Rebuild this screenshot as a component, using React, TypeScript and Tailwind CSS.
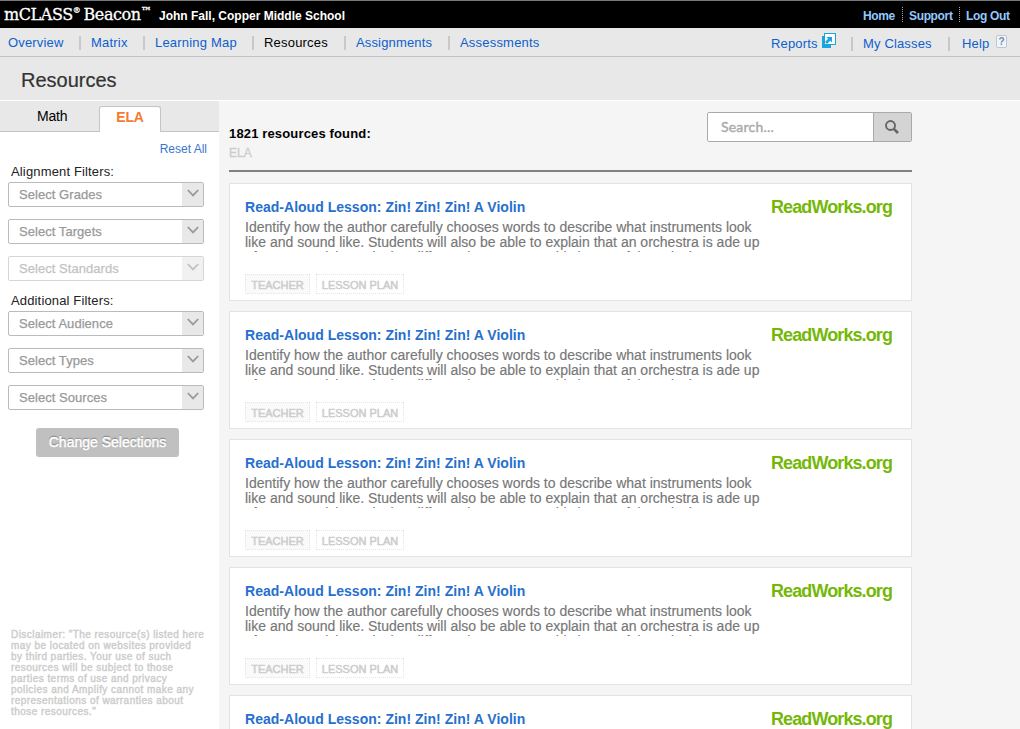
import React from "react";

const nav = [
  { label: "Overview", box: "w-[71px]", track: "tracking-[0.16px]" },
  { label: "Matrix", box: "w-[52px]", track: "tracking-[0.2px]" },
  { label: "Learning Map", box: "w-[97px]", track: "tracking-[0.2px]" },
  { label: "Resources", box: "w-[80px]", track: "tracking-[0.2px]", active: true },
  { label: "Assignments", box: "w-[92px]", track: "tracking-[0.15px]" },
  { label: "Assessments", box: "w-[90px]", track: "tracking-[0.2px]" },
];

function Chevron() {
  return (
    <svg width="12" height="8" viewBox="0 0 12 8" fill="none" stroke="#999" strokeWidth="1.8">
      <path d="M0.8 1 L6 6.4 L11.2 1" />
    </svg>
  );
}

function Select({ label, disabled = false }: { label: string; disabled?: boolean }) {
  return (
    <div
      className={`flex h-[25px] w-[196px] overflow-hidden rounded-[2px] border border-[#bbb] bg-white ${disabled ? "opacity-60" : ""}`}
    >
      <span className="flex-1 pl-[10px] text-[13px] leading-[23px] tracking-[0.05px] text-[#999] [-webkit-text-stroke:0.25px_#999]">
        {label}
      </span>
      <span className="flex w-[21px] justify-center bg-[#e8e8e8] pt-[6px]">
        <Chevron />
      </span>
    </div>
  );
}

function ReportsIcon() {
  return (
    <svg width="14" height="15" viewBox="0 0 14 15">
      <rect x="0" y="3" width="9" height="12" fill="#1ba4de" />
      <rect x="2.5" y="0.5" width="11" height="11" fill="#fff" stroke="#1ba4de" />
      <path d="M4.5 4 H10 V9.5 L8.2 7.8 L5 11 L3 9 L6.2 5.8 Z" fill="#1ba4de" />
    </svg>
  );
}

function Card() {
  return (
    <article className="flex h-[118px] w-[683px] shrink-0 border border-[#e3e3e3] bg-white pl-[15px]">
      <div className="w-[526px] pt-[15px]">
        <h2 className="h-[21px] whitespace-nowrap text-[14px] font-bold leading-[17px] tracking-[0.02px] text-[#266fce]">
          Read-Aloud Lesson: Zin! Zin! Zin! A Violin
        </h2>
        <p className="h-[32px] overflow-hidden whitespace-nowrap text-[14px] leading-[15px] text-[#777] [-webkit-text-stroke:0.15px_#777]">
          Identify how the author carefully chooses words to describe what instruments look
          <br />
          like and sound like. Students will also be able to explain that an orchestra is ade up
          <br />
          of many musicians playing different instruments. This is a useful musical
        </p>
        <div className="mt-[22px] flex gap-[6px] text-[11px] leading-[20px] text-[#ccc] [-webkit-text-stroke:0.5px_#ccc]">
          <span className="h-[20px] w-[65px] border border-dotted border-[#e4e4e4] bg-[#fafafa] text-center">TEACHER</span>
          <span className="h-[20px] w-[88px] whitespace-nowrap border border-dotted border-[#e4e4e4] text-center">LESSON PLAN</span>
        </div>
      </div>
      <div className="pt-[12px] text-[18px] font-bold leading-[22px] tracking-[-0.9px] text-[#74b807]">ReadWorks.org</div>
    </article>
  );
}

export default function App() {
  return (
    <div className="flex h-[729px] w-[1020px] flex-col overflow-hidden bg-[#f5f5f5] font-['Liberation_Sans',Arial,sans-serif]">
      <header className="flex h-[28px] shrink-0 justify-between border-t border-[#777] bg-black text-white">
        <div className="flex whitespace-nowrap">
          <div className="flex w-[154px] items-start pl-[4px] font-['DejaVu_Serif',serif] text-[16px] leading-[27px] tracking-[-0.4px] [-webkit-text-stroke:0.3px_#fff]">
            <span>mCLASS</span>
            <span className="text-[8px] leading-[20px]">®</span>
            <span className="pl-[3px]">Beacon</span>
            <span className="text-[11px] leading-[22px]">™</span>
          </div>
          <div className="pl-[5px] text-[12px] font-bold leading-[30px]">John Fall, Copper Middle School</div>
        </div>
        <div className="flex items-start whitespace-nowrap pt-[6px] text-[12px] font-bold leading-[19px] tracking-[-0.35px] text-[#93c9ff]">
          <span className="w-[39px]">Home</span>
          <span className="h-[15px] w-[57px] border-l border-dotted border-[#93a9bf] pl-[6px]">Support</span>
          <span className="h-[15px] w-[61px] border-l border-dotted border-[#93a9bf] pl-[6px]">Log Out</span>
        </div>
      </header>
      <nav className="flex h-[29px] shrink-0 justify-between border-b border-[#c2c2c2] bg-[#e8e8e8] text-[13px] leading-[29px] text-[#0d5fce]">
        <div className="flex pl-[8px]">
          {nav.map((n, i) => (
            <div key={n.label} className="flex whitespace-nowrap">
              {i > 0 && <span className="mr-[10px] mt-[8px] h-[14px] w-[2px] bg-[#c8c8c8]" />}
              <span className={`${n.box} ${n.track} ${n.active ? "text-black" : ""}`}>{n.label}</span>
            </div>
          ))}
        </div>
        <div className="flex whitespace-nowrap pr-[13px] leading-[31px] tracking-[0.15px]">
          <span className="w-[51px]">Reports</span>
          <span className="w-[29px] pt-[5px]"><ReportsIcon /></span>
          <span className="mr-[10px] mt-[9px] h-[14px] w-[2px] bg-[#c8c8c8]" />
          <span className="w-[85px]">My Classes</span>
          <span className="mr-[12px] mt-[9px] h-[14px] w-[2px] bg-[#c8c8c8]" />
          <span className="w-[34px]">Help</span>
          <span className="mt-[7px] h-[13px] w-[11px] rounded-[2px] border border-[#b8c8d6] bg-[#f1f6fa] text-center text-[10px] font-bold leading-[12px] tracking-normal text-[#73899d]">?</span>
        </div>
      </nav>
      <div className="h-[44px] shrink-0 border-b border-white bg-[#e8e8e8] pl-[21px] text-[20px] leading-[46px] text-[#333] [-webkit-text-stroke:0.2px_#333]">Resources</div>
      <div className="flex min-h-0 flex-1">
        <aside className="flex w-[219px] shrink-0 flex-col bg-white">
          <div className="flex h-[31px] shrink-0 bg-[#e8e8e8] text-[14px]">
            <div className="w-[99px] border-b border-[#c5c5bd] pl-[37px] leading-[31px] tracking-[-0.2px] text-black">Math</div>
            <div className="mt-[5px] w-[62px] rounded-t-[3px] border border-b-0 border-[#c5c5bd] bg-white text-center font-bold leading-[21px] tracking-[-0.2px] text-[#f47b30]">ELA</div>
            <div className="flex-1 border-b border-[#c5c5bd]" />
          </div>
          <div className="h-[32px] pr-[12px] pt-[9px] text-right text-[12px] leading-[17px] text-[#3a75cf]">Reset All</div>
          <div className="h-[18px] pl-[11px] text-[13px] leading-[16px] tracking-[0.15px] text-[#222]">Alignment Filters:</div>
          <div className="flex flex-col gap-[12px] pl-[8px]">
            <Select label="Select Grades" />
            <Select label="Select Targets" />
            <Select label="Select Standards" disabled />
          </div>
          <div className="mt-[11px] h-[19px] pl-[11px] text-[13px] leading-[17px] tracking-[0.15px] text-[#222]">Additional Filters:</div>
          <div className="flex flex-col gap-[12px] pl-[8px]">
            <Select label="Select Audience" />
            <Select label="Select Types" />
            <Select label="Select Sources" />
          </div>
          <button className="ml-[36px] mt-[18px] h-[29px] w-[143px] shrink-0 rounded-[3px] bg-[#c0c0c0] pb-[1px] text-[14px] leading-[28px] text-white [-webkit-text-stroke:0.5px_#fff] [text-shadow:0_-1px_1px_#666]">
            Change Selections
          </button>
          <p className="mt-auto whitespace-nowrap pb-[12px] pl-[11px] text-[10px] leading-[11px] tracking-[0.45px] text-[#ccc] [-webkit-text-stroke:0.4px_#ccc]">
            Disclaimer: "The resource(s) listed here<br />may be located on websites provided<br />by third parties. Your use of such<br />resources will be subject to those<br />parties terms of use and privacy<br />policies and Amplify cannot make any<br />representations of warranties about<br />those resources."
          </p>
        </aside>
        <main className="flex w-[693px] flex-col overflow-hidden pl-[10px]">
          <div className="flex h-[71px] shrink-0 justify-between border-b-2 border-[#808080]">
            <div className="pt-[25px]">
              <div className="text-[13px] font-bold leading-[16px] tracking-[0.15px] text-black">1821 resources found:</div>
              <div className="pt-[4px] text-[12px] leading-[15px] text-[#ccc] [-webkit-text-stroke:0.3px_#ccc]">ELA</div>
            </div>
            <div className="mt-[11px] flex h-[30px] w-[205px] overflow-hidden rounded-[2px] border border-[#aaa]">
              <div className="flex-1 bg-white pl-[13px] font-[Lato,sans-serif] text-[14px] leading-[28px] tracking-[0.2px] text-[#aaa] [-webkit-text-stroke:0.4px_#aaa]">Search...</div>
              <div className="flex w-[38px] items-center justify-center border-l border-[#aaa] bg-[#d4d4d4] pr-[1px]">
                <svg width="14" height="14" viewBox="0 0 14 14" fill="none" stroke="#666">
                  <circle cx="5.5" cy="5.5" r="4.5" strokeWidth="1.9" />
                  <path d="M8.8 8.8 L13 13" strokeWidth="2.6" />
                </svg>
              </div>
            </div>
          </div>
          <div className="mt-[11px] flex flex-col gap-[10px]">
            {[0, 1, 2, 3, 4].map((i) => <Card key={i} />)}
          </div>
        </main>
      </div>
    </div>
  );
}
